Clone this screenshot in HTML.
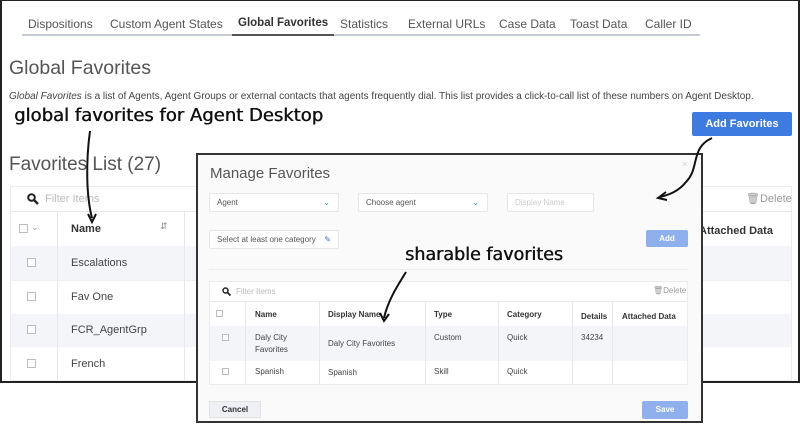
<!DOCTYPE html>
<html><head><meta charset="utf-8"><style>
*{box-sizing:border-box;margin:0;padding:0}
body{width:800px;height:427px;background:#fff;position:relative;overflow:hidden;font-family:"Liberation Sans",sans-serif;color:#444}
.a{position:absolute;white-space:nowrap}
.hand{font-family:"DejaVu Sans",sans-serif;color:#111;letter-spacing:0px;text-shadow:0.5px 0 0 #111}
.sel{position:absolute;background:#fff;border:1px solid #e6e6e6;border-radius:2px;font-size:8px;color:#555;padding-left:7px;line-height:18px}
.row{position:absolute;left:0;right:0}
.cb{position:absolute;width:9px;height:9px;border:1px solid #bbb;background:#fff}
.vl{position:absolute;top:0;bottom:0;width:1px;background:#e8e8e8}
.tab{position:absolute;top:17px;font-size:12px;color:#555;white-space:nowrap}
</style></head><body>
<div class="a" style="left:0;top:0;width:800px;height:383px;border:2px solid #222;border-top:1px solid #222"></div>
<div class="a" style="left:22px;top:34px;width:678px;height:2px;background:#c5cad3"></div>
<div class="a" style="left:232px;top:34px;width:102px;height:2px;background:#555"></div>
<div class="tab" style="left:28px">Dispositions</div>
<div class="tab" style="left:110px">Custom Agent States</div>
<div class="tab" style="left:238px;color:#333;font-weight:bold;font-size:11.5px">Global Favorites</div>
<div class="tab" style="left:340px">Statistics</div>
<div class="tab" style="left:408px">External URLs</div>
<div class="tab" style="left:499px">Case Data</div>
<div class="tab" style="left:570px">Toast Data</div>
<div class="tab" style="left:645px">Caller ID</div>
<div class="a" style="left:9px;top:57px;font-size:19.5px;color:#555">Global Favorites</div>
<div class="a" style="left:9px;top:91px;font-size:10px;color:#444"><i>Global Favorites</i> is a list of Agents, Agent Groups or external contacts that agents frequently dial. This list provides a click-to-call list of these numbers on Agent Desktop.</div>
<div class="a hand" style="left:14px;top:105px;font-size:18px">global favorites for Agent Desktop</div>
<div class="a" style="left:692px;top:112px;width:100px;height:24px;background:#3e7be0;border-radius:2px;color:#fff;font-size:11px;font-weight:bold;text-align:center;line-height:24px">Add Favorites</div>
<div class="a" style="left:9px;top:154px;font-size:19px;color:#555">Favorites List (27)</div>
<div class="a" style="left:10px;top:186px;width:782px;height:195px;border:1px solid #ececec;background:#fff">
 <div class="row" style="top:24px;height:1px;background:#e6e6e6"></div>
 <svg class="a" style="left:16px;top:6px" width="12" height="12"><circle cx="4.5" cy="4.5" r="3.3" stroke="#222" stroke-width="2" fill="none"/><path d="M7 7 L11 11" stroke="#222" stroke-width="2.4"/></svg>
 <div class="a" style="left:34px;top:6px;font-size:11px;color:#bbb">Filter Items</div>
 <div class="a" style="left:735px;top:5px;font-size:11px;color:#999">&#x1F5D1;&#xFE0E;Delete</div>
 <div class="row" style="top:59px;height:34px;background:#f4f5f8"></div>
 <div class="row" style="top:93px;height:1px;background:#eee"></div>
 <div class="row" style="top:127px;height:33px;background:#f4f5f8"></div>
 <div class="vl" style="left:46px;top:25px"></div><div class="vl" style="left:173px;top:25px"></div>
 <div class="cb" style="left:8px;top:37px"></div><div class="a" style="left:20px;top:35px;font-size:9px;color:#999">&#8964;</div>
 <div class="a" style="left:60px;top:36px;font-size:11px;font-weight:bold;color:#333">Name</div>
 <div class="a" style="left:149px;top:34px;font-size:9px;color:#888">&#8693;</div>
 <div class="a" style="left:688px;top:38px;font-size:11px;font-weight:bold;color:#333">Attached Data</div>
 <div class="cb" style="left:16px;top:71px"></div><div class="a" style="left:60px;top:70px;font-size:11px">Escalations</div>
 <div class="cb" style="left:16px;top:105px"></div><div class="a" style="left:60px;top:104px;font-size:11px">Fav One</div>
 <div class="cb" style="left:16px;top:138px"></div><div class="a" style="left:60px;top:137px;font-size:11px">FCR_AgentGrp</div>
 <div class="cb" style="left:16px;top:172px"></div><div class="a" style="left:60px;top:171px;font-size:11px">French</div>
</div>
<div class="a" style="left:196px;top:153px;width:507px;height:270px;background:#fafafa;border:2px solid #333">
 <div class="a" style="left:12px;top:10px;font-size:15px;color:#555">Manage Favorites</div>
 <div class="a" style="left:484px;top:4px;font-size:9px;color:#ccc">×</div>
 <div class="sel" style="left:11px;top:38px;width:130px;height:19px">Agent<span style="position:absolute;right:8px;color:#4a7be0">&#8964;</span></div>
 <div class="sel" style="left:160px;top:38px;width:130px;height:19px">Choose agent<span style="position:absolute;right:8px;color:#4a7be0">&#8964;</span></div>
 <div class="sel" style="left:309px;top:38px;width:87px;height:19px;color:#ccc">Display Name</div>
 <div class="sel" style="left:11px;top:75px;width:130px;height:19px">Select at least one category<span style="position:absolute;right:7px;color:#3a6fd8">&#9998;</span></div>
 <div class="a" style="left:448px;top:75px;width:42px;height:17px;background:#8fb0ec;border-radius:2px;color:#fff;font-size:8px;font-weight:bold;text-align:center;line-height:17px">Add</div>
 <div class="a" style="left:11px;top:114px;width:479px;height:1px;background:#eee"></div>
 <div class="a" style="left:11px;top:126px;width:479px;height:104px;border:1px solid #ececec;background:#fff">
  <div class="row" style="top:19px;height:1px;background:#e6e6e6"></div>
  <svg class="a" style="left:12px;top:5px" width="9" height="9"><circle cx="3.5" cy="3.5" r="2.5" stroke="#222" stroke-width="1.5" fill="none"/><path d="M5.5 5.5 L8.5 8.5" stroke="#222" stroke-width="1.8"/></svg>
  <div class="a" style="left:26px;top:5px;font-size:8px;color:#bbb">Filter Items</div>
  <div class="a" style="left:443px;top:4px;font-size:8px;color:#999">&#x1F5D1;&#xFE0E;Delete</div>
  <div class="row" style="top:44px;height:35px;background:#f4f5f8"></div>
  <div class="vl" style="left:35px;top:20px"></div><div class="vl" style="left:109px;top:20px"></div><div class="vl" style="left:215px;top:20px"></div><div class="vl" style="left:288px;top:20px"></div><div class="vl" style="left:362px;top:20px"></div><div class="vl" style="left:402px;top:20px"></div>
  <div class="cb" style="left:6px;top:28px;width:7px;height:7px"></div>
  <div class="a" style="left:45px;top:28px;font-size:8px;font-weight:bold;color:#333">Name</div>
  <div class="a" style="left:118px;top:28px;font-size:8px;font-weight:bold;color:#333">Display Name</div>
  <div class="a" style="left:224px;top:28px;font-size:8px;font-weight:bold;color:#333">Type</div>
  <div class="a" style="left:297px;top:28px;font-size:8px;font-weight:bold;color:#333">Category</div>
  <div class="a" style="left:371px;top:30px;font-size:8px;font-weight:bold;color:#333">Details</div>
  <div class="a" style="left:412px;top:30px;font-size:8px;font-weight:bold;color:#333">Attached Data</div>
  <div class="cb" style="left:12px;top:52px;width:7px;height:7px"></div>
  <div class="a" style="left:45px;top:50px;font-size:8px;line-height:12px">Daly City<br>Favorites</div>
  <div class="a" style="left:118px;top:57px;font-size:8px">Daly City Favorites</div>
  <div class="a" style="left:224px;top:51px;font-size:8px">Custom</div>
  <div class="a" style="left:297px;top:51px;font-size:8px">Quick</div>
  <div class="a" style="left:371px;top:51px;font-size:8px">34234</div>
  <div class="cb" style="left:12px;top:86px;width:7px;height:7px"></div>
  <div class="a" style="left:45px;top:85px;font-size:8px">Spanish</div>
  <div class="a" style="left:118px;top:86px;font-size:8px">Spanish</div>
  <div class="a" style="left:224px;top:85px;font-size:8px">Skill</div>
  <div class="a" style="left:297px;top:85px;font-size:8px">Quick</div>
 </div>
 <div class="a" style="left:11px;top:246px;width:52px;height:17px;background:#eef0f3;border:1px solid #e2e2e2;font-size:8px;font-weight:bold;color:#333;text-align:center;line-height:15px">Cancel</div>
 <div class="a" style="left:444px;top:246px;width:46px;height:18px;background:#8fb0ec;border-radius:2px;color:#fff;font-size:8px;font-weight:bold;text-align:center;line-height:18px">Save</div>
 <div class="a hand" style="left:207px;top:90px;font-size:17.5px">sharable favorites</div>
</div>
<svg class="a" style="left:0;top:0" width="800" height="427" fill="none" stroke="#111" stroke-width="2">
 <path d="M90 131 C86 160 86 195 92 218"/><path d="M88 214 L92 222 L96 214"/>
 <path d="M406 272 C398 285 388 300 384 318"/><path d="M380 313 L384 321 L389 314"/>
 <path d="M712 138 C690 148 700 168 686 182 C678 192 668 195 660 197"/><path d="M666 192 L658 198 L667 200"/>
</svg>
</body></html>
